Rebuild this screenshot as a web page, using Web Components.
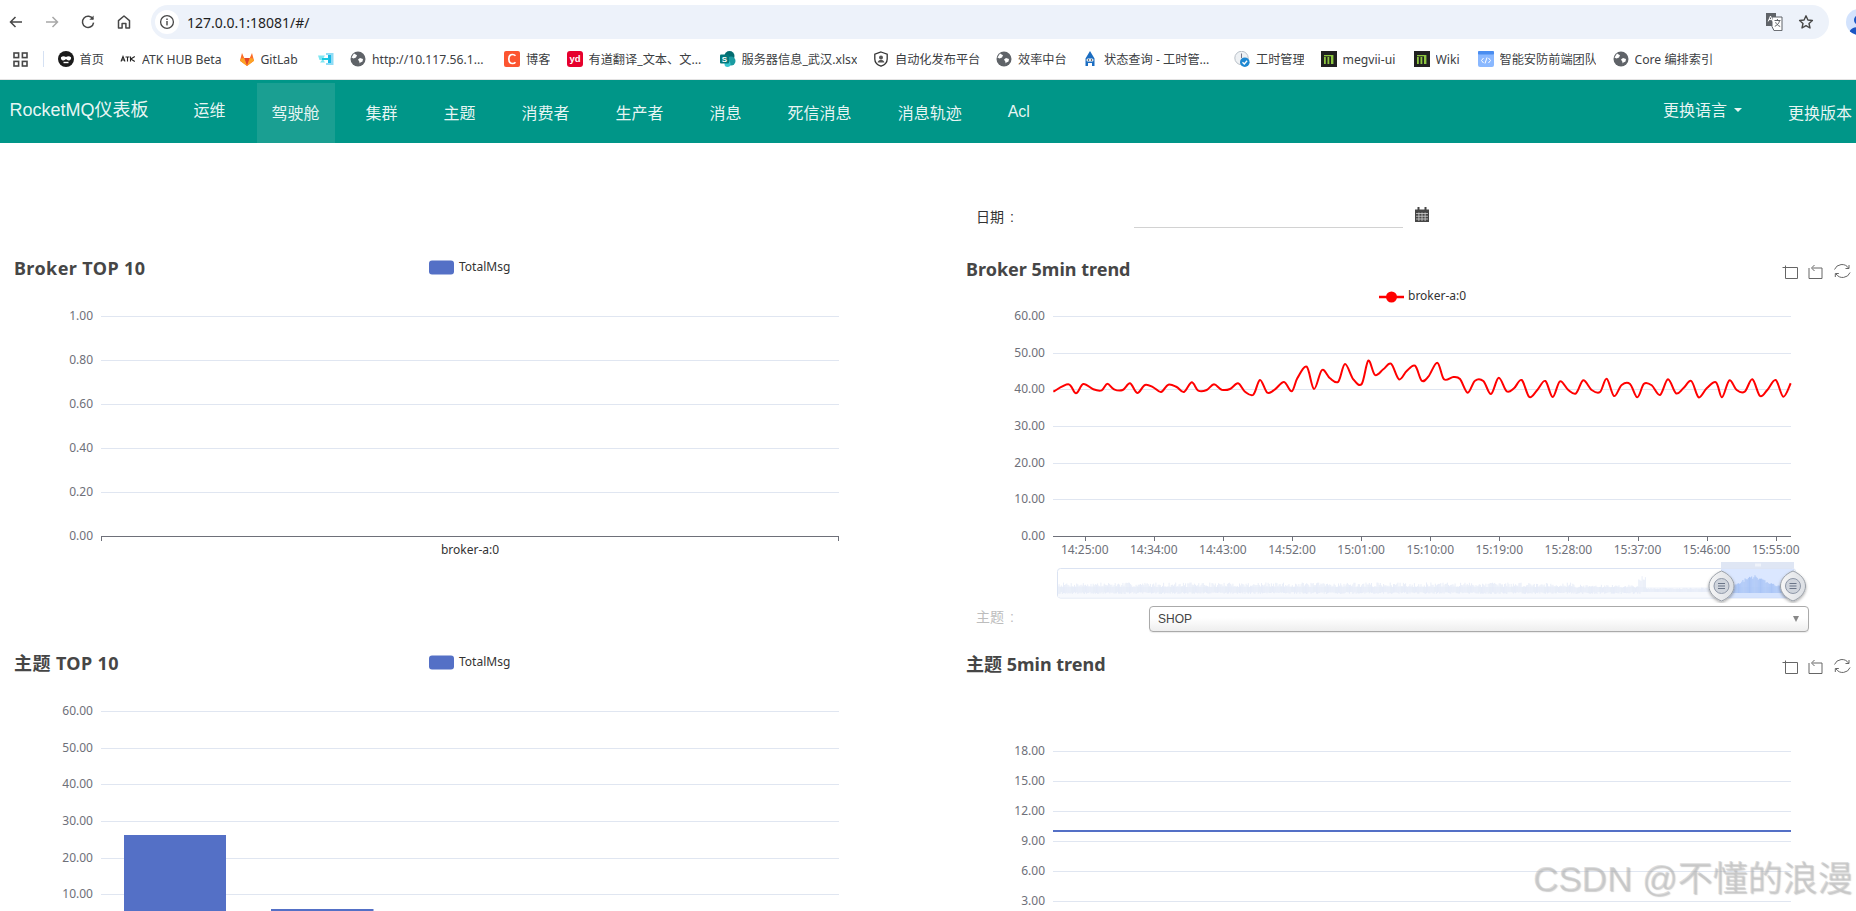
<!DOCTYPE html>
<html lang="zh">
<head>
<meta charset="utf-8">
<title>RocketMQ</title>
<style>
html,body{margin:0;padding:0;height:911px;overflow:hidden;background:#fff;font-family:"Liberation Sans","Noto Sans CJK SC",sans-serif}
</style>
</head>
<body>
<rocket-app>
  <browser-toolbar slot="chrome" url="127.0.0.1:18081/#/"></browser-toolbar>
  <bookmark-bar slot="chrome">
    <bookmark-item icon="monkey" w="24">首页</bookmark-item>
    <bookmark-item icon="atk" w="80">ATK HUB Beta</bookmark-item>
    <bookmark-item icon="gitlab" w="40.5">GitLab</bookmark-item>
    <bookmark-item icon="cyan" w="0"></bookmark-item>
    <bookmark-item icon="globe" w="115.5">http://10.117.56.1...</bookmark-item>
    <bookmark-item icon="csdn" w="24">博客</bookmark-item>
    <bookmark-item icon="yd" w="114.5">有道翻译_文本、文...</bookmark-item>
    <bookmark-item icon="sharepoint" w="115">服务器信息_武汉.xlsx</bookmark-item>
    <bookmark-item icon="shield" w="84.5">自动化发布平台</bookmark-item>
    <bookmark-item icon="globe" w="47.5">效率中台</bookmark-item>
    <bookmark-item icon="robot" w="113.5">状态查询 - 工时管...</bookmark-item>
    <bookmark-item icon="clock" w="48">工时管理</bookmark-item>
    <bookmark-item icon="megvii" w="54.5">megvii-ui</bookmark-item>
    <bookmark-item icon="megvii" w="25.5">Wiki</bookmark-item>
    <bookmark-item icon="code" w="96.5">智能安防前端团队</bookmark-item>
    <bookmark-item icon="globe" w="80">Core 编排索引</bookmark-item>
  </bookmark-bar>
  <app-navbar slot="chrome" brand="RocketMQ仪表板">
    <nav-item raised>运维</nav-item>
    <nav-item active>驾驶舱</nav-item>
    <nav-item>集群</nav-item>
    <nav-item>主题</nav-item>
    <nav-item>消费者</nav-item>
    <nav-item>生产者</nav-item>
    <nav-item>消息</nav-item>
    <nav-item>死信消息</nav-item>
    <nav-item>消息轨迹</nav-item>
    <nav-item>Acl</nav-item>
    <nav-item slot="right" raised caret>更换语言</nav-item>
    <nav-item slot="right">更换版本</nav-item>
  </app-navbar>

  <dash-grid slot="main">
    <dash-column slot="left" lead="108">
      <echart-panel kind="broker-top" heading="Broker TOP 10" h="395" ty="19" ls=".4"></echart-panel>
      <echart-panel kind="topic-top" heading="主题 TOP 10" h="395" ty="19" ls=".4"></echart-panel>
    </dash-column>
    <dash-column slot="right" lead="60">
      <date-filter label="日期 :"></date-filter>
      <echart-panel kind="broker-trend" heading="Broker 5min trend" h="352" ty="20"></echart-panel>
      <topic-select label="主题 :" value="SHOP"></topic-select>
      <echart-panel kind="topic-trend" heading="主题 5min trend" h="395" ty="20"></echart-panel>
    </dash-column>
  </dash-grid>
  <page-watermark slot="main">CSDN @不懂的浪漫</page-watermark>
</rocket-app>

<script>
const CJK = '"Noto Sans CJK SC"';
function shadow(el, html){ const r = el.attachShadow({mode:'open'}); r.innerHTML = html; return r; }

customElements.define('rocket-app', class extends HTMLElement{
  constructor(){super();shadow(this,`<style>
    :host{display:block;height:911px;overflow:hidden;position:relative}
    .main{position:relative;height:768px;overflow:hidden}
  </style><slot name="chrome"></slot><div class="main"><slot name="main"></slot></div>`);}
});

customElements.define('browser-toolbar', class extends HTMLElement{
  constructor(){super();
    const s='fill="none" stroke="#474747" stroke-width="1.5"';
    shadow(this,`<style>
    :host{display:flex;height:40px;overflow:hidden;background:#fff;box-sizing:border-box;align-items:flex-start;font-family:"Noto Sans",sans-serif}
    .nav{width:36px;height:34px;margin-top:5px;display:flex;align-items:center;justify-content:center;flex:none}
    .navs{display:flex;margin-left:-2px;flex:none}
    .url{flex:none;width:1678px;height:34px;margin:5px 0 0 9px;background:#edf2fa;border-radius:17px;display:flex;align-items:center;box-sizing:border-box;padding:0 0 0 4px}
    .info{width:24px;height:24px;border-radius:12px;background:#fff;display:flex;align-items:center;justify-content:center;flex:none}
    .txt{margin-left:8px;font-size:14px;color:#1f1f1f;flex:1}
    .tr{width:18px;height:18px;margin-right:15px;flex:none}
    .star{margin-right:15.5px;flex:none}
    .av{width:26px;height:26px;border-radius:13px;background:#d3e3fd;margin:9px 0 0 17px;flex:none;overflow:hidden;display:flex;align-items:flex-end;justify-content:center}
    </style>
    <div class="navs">
      <div class="nav"><svg width="16" height="16" viewBox="0 0 16 16"><path d="M14 8H3M7.5 3 2.5 8l5 5" ${s}/></svg></div>
      <div class="nav"><svg width="16" height="16" viewBox="0 0 16 16"><path d="M2 8h11M8.5 3l5 5-5 5" fill="none" stroke="#a8a8a8" stroke-width="1.5"/></svg></div>
      <div class="nav"><svg width="16" height="16" viewBox="0 0 16 16"><path d="M13 5.2A5.6 5.6 0 1 0 13.6 8.6" ${s}/><path d="M13.6 1.6v4.2H9.4z" fill="#474747"/></svg></div>
      <div class="nav"><svg width="16" height="16" viewBox="0 0 16 16"><path d="M8 2 2.5 6.6V14h3.6V9.6h3.8V14h3.6V6.6z" ${s} stroke-linejoin="round"/></svg></div>
    </div>
    <div class="url">
      <div class="info"><svg width="16" height="16" viewBox="0 0 16 16"><circle cx="8" cy="8" r="6.4" fill="none" stroke="#474747" stroke-width="1.3"/><rect x="7.3" y="7" width="1.4" height="4.4" fill="#474747"/><rect x="7.3" y="4.5" width="1.4" height="1.5" fill="#474747"/></svg></div>
      <div class="txt">${this.getAttribute('url')||''}</div>
      <svg class="tr" viewBox="0 0 18 18"><rect x="1" y="0" width="10" height="13" fill="#5f6368"/><path d="M7 4h10v13.6H9l-2-4z" fill="#fff" stroke="#5f6368"/><path d="M3.2 8.4 5.5 3l2.2 5.4M4 6.6h3" stroke="#fff" fill="none"/><path d="M9.5 7.5h6M12.4 6v1.5M14.6 7.5c-.6 3-2.6 5-4.8 5.8M10.6 9.2c.8 2 2.2 3.3 4.6 4.3" stroke="#5f6368" fill="none"/></svg>
      <svg class="star" width="16" height="16" viewBox="0 0 16 16"><path d="M8 1.8 9.9 6l4.5.5-3.4 3 1 4.5L8 11.6 4 14l1-4.5-3.4-3L6.1 6z" fill="none" stroke="#474747" stroke-width="1.4" stroke-linejoin="round"/></svg>
    </div>
    <div class="av"><svg width="22" height="22" viewBox="0 0 22 22"><circle cx="11" cy="7" r="5" fill="#1a56c4"/><path d="M1 22c0-6 4-8 10-8s10 2 10 8z" fill="#1a56c4"/></svg></div>`);}
});

customElements.define('bookmark-bar', class extends HTMLElement{
  constructor(){super();shadow(this,`<style>
    :host{display:flex;height:40px;box-sizing:border-box;background:#fff;border-bottom:1px solid #e3e3e3;align-items:center;padding-left:13px;overflow:hidden;padding-bottom:1px}
    .apps{width:15px;height:15px;flex:none}
    .sep{width:1px;height:16px;background:#d5e1f3;margin:0 14px 0 14.5px;flex:none}
    .list{display:flex;gap:16.5px;align-items:center}
    </style>
    <svg class="apps" viewBox="0 0 15 15"><g fill="none" stroke="#474747" stroke-width="1.6"><rect x="1" y="1" width="4.6" height="4.6"/><rect x="9.4" y="1" width="4.6" height="4.6"/><rect x="1" y="9.4" width="4.6" height="4.6"/><rect x="9.4" y="9.4" width="4.6" height="4.6"/></g></svg>
    <div class="sep"></div><div class="list"><slot></slot></div>`);}
});

const BM_ICONS = {
  monkey:`<circle cx="8" cy="8" r="8" fill="#1b1b1b"/><path d="M3 6.2c1.5-1.4 3.4-1.2 5-.3 1.6-.9 3.5-1.1 5 .3.4 1.5-.4 3-1.8 3.2-1.3.2-2.4-.6-3.2-1.3-.8.7-1.9 1.5-3.2 1.3C3.400 9.200 2.600 7.700 3 6.200z" fill="#fff"/><path d="M5.500 11.500h5" stroke="#fff" stroke-width="1.400"/>`,
  atk:`<path d="M1 10.500 3 5.500l2 5M1.800 9h2.400M5.500 6h4M7.500 6v4.500M10.500 5.500v5M14.800 5.500l-4 2.500 4 2.500" fill="none" stroke="#222" stroke-width="1.100"/>`,
  gitlab:`<path d="M8 15 1 9.800 3 2l2.200 5h5.600L13 2l2 7.800z" fill="#fc6d26"/><path d="M8 15 5.200 7h5.600z" fill="#e24329"/><path d="M8 15 1 9.800 2 7.400 5.200 7z" fill="#fca326"/><path d="M8 15l7-5.200-1-2.400L10.800 7z" fill="#fca326"/>`,
  cyan:`<path d="M0 4.500h7L5.500 7H9v2H5.500L7 11.500H2L4 9H1.500z" fill="#7fe6f2"/><path d="M8 2h7.500v12H8v-2h5V4H8z" fill="#8fdcf5"/><path d="M10 4h3v8h-3z" fill="#19b7e6"/><path d="M4 7h7v2H4z" fill="#19c9e0"/>`,
  globe:`<circle cx="8" cy="8" r="7.500" fill="#5f6368"/><path d="M4 2.500 7 4.200 6 6.500 3.500 7.500 1.500 6.500M9 15l.5-3 3-1.500.5-2.500-3-1-2 1.500L9.500 11" fill="#fff"/>`,
  csdn:`<rect width="16" height="16" rx="2" fill="#fc5531"/><path d="M11.500 4.800C10.700 3.900 9.800 3.500 8.600 3.500 6.200 3.500 4.800 5.400 4.800 8s1.400 4.500 3.800 4.500c1.200 0 2.100-.4 2.900-1.300" fill="none" stroke="#fff" stroke-width="1.700"/>`,
  yd:`<rect width="16" height="16" rx="3" fill="#e6002d"/><text x="8" y="11.300" font-size="9.500" text-anchor="middle" fill="#fff" font-family="Liberation Sans" font-weight="bold">yd</text>`,
  sharepoint:`<circle cx="9.500" cy="5" r="5" fill="#036c70"/><circle cx="11" cy="10" r="4.500" fill="#1a9ba1"/><circle cx="7.500" cy="13" r="3" fill="#37c6d0"/><rect x="0" y="3.500" width="9" height="9" rx="1" fill="#03787c"/><text x="4.500" y="10.800" font-size="8" text-anchor="middle" fill="#fff" font-family="Liberation Sans" font-weight="bold">S</text>`,
  shield:`<path d="M8 1 14.200 3.200V8c0 3.600-2.600 5.900-6.200 7.200C4.400 13.900 1.800 11.600 1.800 8V3.200z" fill="#fff" stroke="#333" stroke-width="1.300"/><circle cx="8" cy="6.500" r="2" fill="#555"/><path d="M4.500 11.500c.6-2 2-2.800 3.500-2.800s2.900.8 3.500 2.800z" fill="#555"/>`,
  robot:`<path d="M8 0 12.500 7.500V15H10V12H6v3H3.500V7.500z" fill="#1b6dc1"/><rect x="4.500" y="7.500" width="7" height="3" rx="1.500" fill="#fff"/><circle cx="6.500" cy="9" r=".8" fill="#123"/><circle cx="9.500" cy="9" r=".8" fill="#123"/>`,
  clock:`<circle cx="7.500" cy="7" r="6.700" fill="#eef1f4" stroke="#b9c0c8"/><path d="M7.500 2.500V7" stroke="#778" stroke-width="1"/><circle cx="10.800" cy="11.200" r="4.800" fill="#1e88d2"/><path d="M8.500 11.200l1.800 1.800 2.800-3.200" fill="none" stroke="#fff" stroke-width="1.300"/>`,
  megvii:`<rect width="16" height="16" fill="#202020"/><rect x="3" y="6" width="1.800" height="7" fill="#8cc63f"/><rect x="6.500" y="6" width="1.800" height="7" fill="#8cc63f"/><rect x="10" y="4" width="2.400" height="9" fill="#8cc63f"/><rect x="3" y="4" width="7" height="1.300" fill="#8cc63f"/>`,
  code:`<rect width="16" height="16" rx="2" fill="#8ab8ff"/><rect width="16" height="3.500" rx="1" fill="#4a8df0"/><path d="M5.500 7 3.500 9.500l2 2.500M10.500 7l2 2.500-2 2.500M9 6.500 7 12.500" fill="none" stroke="#fff" stroke-width="1"/>`
};
customElements.define('bookmark-item', class extends HTMLElement{
  constructor(){super();
    const w=this.getAttribute('w');
    shadow(this,`<style>
    :host{display:flex;align-items:center;flex:none;font:12.2px "Noto Sans",${CJK},sans-serif;color:#3c4043;white-space:nowrap}
    svg{width:16px;height:16px;flex:none}
    .t{margin-left:${+w?6:0}px;width:${w}px;overflow:hidden}
    </style><svg viewBox="0 0 16 16">${BM_ICONS[this.getAttribute('icon')]||''}</svg><span class="t"><slot></slot></span>`);}
});

customElements.define('app-navbar', class extends HTMLElement{
  constructor(){super();shadow(this,`<style>
    :host{display:flex;height:63px;background:#009688;overflow:hidden;color:#fff;gap:0}
    .brand{font:18px "Liberation Sans",${CJK},sans-serif;line-height:61px;height:60px;margin-left:9.500px;width:154px;flex:none;color:rgba(255,255,255,.93);white-space:nowrap;padding-right:15px;box-sizing:content-box}
    .list{display:flex;gap:16px;flex:1}
    .right{display:flex;gap:16px;margin-right:-11px;flex:none}
    </style><div class="brand">${this.getAttribute('brand')}</div>
    <div class="list"><slot></slot></div><div class="right"><slot name="right"></slot></div>`);}
});

customElements.define('nav-item', class extends HTMLElement{
  constructor(){super();
    const raised=this.hasAttribute('raised'), active=this.hasAttribute('active'), caret=this.hasAttribute('caret');
    shadow(this,`<style>
    :host{display:flex;align-items:center;justify-content:center;box-sizing:border-box;height:60px;margin-top:${raised?0:3}px;padding:0 15px 2px;font:16px "Liberation Sans",${CJK},sans-serif;color:rgba(255,255,255,.92);white-space:nowrap;flex:none;${active?'background:#1a9f92;':''}}
    i{display:inline-block;width:0;height:0;margin-left:7px;margin-top:2px;border:4px solid transparent;border-top-color:#e8f5f3;border-bottom:0}
    </style><slot></slot>${caret?'<i></i>':''}`);}
});

customElements.define('dash-grid', class extends HTMLElement{
  constructor(){super();shadow(this,`<style>
    :host{display:grid;grid-template-columns:1fr 1fr;width:1856px}
    ::slotted([slot=left]){padding-right:24px}
    ::slotted([slot=right]){padding-left:24px}
    </style><slot name="left"></slot><slot name="right"></slot>`);}
});
customElements.define('dash-column', class extends HTMLElement{
  constructor(){super();shadow(this,`<style>
    :host{display:flex;flex-direction:column;box-sizing:border-box;padding-top:${this.getAttribute('lead')}px}
    </style><slot></slot>`);}
});

customElements.define('date-filter', class extends HTMLElement{
  constructor(){super();shadow(this,`<style>
    :host{display:flex;height:25px;margin-bottom:23px;padding-left:24px;align-items:flex-start;font:14px "Liberation Sans",${CJK},sans-serif;color:#333}
    .l{width:158px;line-height:28px;flex:none;word-spacing:2px}
    .i{width:269px;height:25px;box-sizing:border-box;border-bottom:1px solid #d2d2d2;flex:none}
    svg{width:14px;height:15px;margin:4px 0 0 12px;flex:none}
    </style><div class="l">${this.getAttribute('label')}</div><div class="i"></div>
    <svg viewBox="0 0 14 15"><path d="M0 2.500h14V15H0z" fill="#464646"/><rect x="2.500" y="0" width="2" height="3.500" fill="#464646"/><rect x="9.500" y="0" width="2" height="3.500" fill="#464646"/><g fill="#cfcfcf"><rect x="1" y="6" width="12" height=".8"/><rect x="1" y="8.800" width="12" height=".8"/><rect x="1" y="11.600" width="12" height=".8"/><rect x="3.500" y="5.500" width=".8" height="8.500"/><rect x="6.600" y="5.500" width=".8" height="8.500"/><rect x="9.700" y="5.500" width=".8" height="8.500"/></g></svg>`);}
});

customElements.define('topic-select', class extends HTMLElement{
  constructor(){super();shadow(this,`<style>
    :host{display:flex;height:26px;margin:3px 47px 14px 0;padding-left:24px;align-items:flex-start;font:14px "Liberation Sans",${CJK},sans-serif;color:#bdbdbd}
    .l{width:173px;line-height:22px;flex:none;word-spacing:2px}
    .s{flex:1;height:26px;box-sizing:border-box;border:1px solid #aaa;border-radius:4px;background:linear-gradient(#fff 0 45%,#eee 100%);display:flex;align-items:center;justify-content:space-between;padding:0 8px;color:#444;font-size:12px;box-shadow:0 1px 1px rgba(0,0,0,.08)}
    i{width:0;height:0;border:3.500px solid transparent;border-top:6px solid #888;border-bottom:0;margin-right:1px}
    </style><div class="l">${this.getAttribute('label')}</div><div class="s"><span>${this.getAttribute('value')}</span><i></i></div>`);}
});

/* -------- charts -------- */
const GRID={x0:101,x1:839,top:65,bottom:285};
function catmull(pts){
  let d=`M${pts[0][0]} ${pts[0][1]}`;
  for(let i=0;i<pts.length-1;i++){
    const p0=pts[i-1]||pts[i],p1=pts[i],p2=pts[i+1],p3=pts[i+2]||p2;
    const c1x=p1[0]+(p2[0]-p0[0])/6,c1y=p1[1]+(p2[1]-p0[1])/6,c2x=p2[0]-(p3[0]-p1[0])/6,c2y=p2[1]-(p3[1]-p1[1])/6;
    d+=`C${c1x.toFixed(1)} ${c1y.toFixed(1)} ${c2x.toFixed(1)} ${c2y.toFixed(1)} ${p2[0].toFixed(1)} ${p2[1].toFixed(1)}`;
  }
  return d;
}
const RED_A=[[40,155],[85,133],[108,160],[130,132],[160,148],[185,151],[202,131],[222,148],[248,150],[270,130],[292,159],[315,135],[340,142],[363,156],[385,134],[410,141],[432,156],[455,127],[475,152],[500,150],[522,133],[545,149],[570,147],[594,130],[615,155],[640,164],[660,120],[682,158],[705,148],[732,126],[755,154],[772,115],[800,80],[822,147],[846,90],[870,115],[895,125],[915,72],[940,118],[965,132],[985,62],[1005,105],[1030,88],[1053,71],[1077,118],[1100,93],[1125,77],[1145,122],[1165,110],[1192,68]];
const RED_B=[[12,118],[40,111],[60,117],[83,158],[105,122],[130,123],[153,162],[176,113],[200,154],[222,145],[245,120],[268,171],[292,150],[316,123],[338,171],[360,124],[385,150],[408,160],[430,121],[455,150],[480,156],[500,116],[522,168],[545,135],[570,132],[592,172],[612,131],[635,136],[660,165],[684,118],[708,160],[730,145],[754,123],[776,172],[800,145],[828,127],[846,172],[868,121],[890,150],[914,155],[937,118],[960,168],[982,150],[1007,120],[1030,170],[1052,130]];
const redPts=[...RED_A.map(p=>[1040+p[0]/3-952,340+p[1]/3-251]),...RED_B.map(p=>[1440+p[0]/3-952,340+p[1]/3-251])];

function gridLines(labels,step){
  let s='';
  labels.forEach((l,i)=>{const y=Math.round(GRID.top+i*step)+.5;
    s+=`<line x1="${GRID.x0}" x2="${GRID.x1}" y1="${y}" y2="${y}" stroke="#e0e6f1"/>`;
    s+=`<text class="ax" x="${GRID.x0-8}" y="${y}" text-anchor="end">${l}</text>`;
  });
  return s;
}
function xAxis(){return `<line x1="${GRID.x0}" x2="${GRID.x1}" y1="285.500" y2="285.500" stroke="#6e7079"/>`;}
function tick(x){return `<line x1="${x}" x2="${x}" y1="285" y2="290" stroke="#6e7079"/>`;}
function barLegend(y){return `<rect x="429" y="${y-7}" width="25" height="14" rx="3" fill="#5470c6"/><text class="lg" x="459" y="${y}">TotalMsg</text>`;}
function toolbox(){
  return `<g transform="translate(829.500,14.500)" fill="none" stroke="#666" stroke-width="1">
    <path d="M4 0V13H16V2H1"/>
    <path d="M31 2.500H40.500V13H27.500V2.500M33 -.5 30 2.500 33 5.500"/>
    <path d="M67 2.500A8 8 0 0 0 53 4M54.600 8.500A8 8 0 0 0 68.600 7M67.500 -.5V3H64M53.800 11.500V8H57.300"/>
  </g>`;
}
function prng(seed){let s=seed;return ()=>{s=(s*1664525+1013904223)>>>0;return s/4294967296;};}
function dataZoom(){
  const r=prng(7);
  let up='',sel='';
  for(let x=106;x<=769;x+=1.1){
    const t=(x-105)/663;
    let a=3+r()*4.5;
    if(t>.78) a*=.7;
    if(t>.88) a=1+r()*1.2;
    if(x>686&&x<694) a=9+r()*5;
    up+=`M${x.toFixed(1)} ${(339-a).toFixed(1)}V${(341+(t>.88?0:r()*2)).toFixed(1)}`;
  }
  for(let x=770;x<=842;x+=1.1){
    const c=Math.exp(-Math.pow((x-802)/14,2));
    const a=3+c*11*(.7+r()*.3)+r()*2;
    sel+=`M${x.toFixed(1)} ${(339-a).toFixed(1)}V342`;
  }
  const handle=x=>`<g transform="translate(${x},335)" filter="url(#hs)">
    <path d="M0 -15C7.500 -12 12.500 -6.500 12.500 0C12.500 6.500 7.500 12 0 15C-7.500 12 -12.500 6.500 -12.500 0C-12.500 -6.500 -7.500 -12 0 -15Z" fill="url(#hg)" stroke="#9aa0a8"/>
    <circle r="7.500" fill="#cfd4dc" stroke="#8f98a8"/><path d="M-3.500 -2.500H3.500M-3.500 0H3.500M-3.500 2.500H3.500" stroke="#6b7488" stroke-width="1.100"/>
  </g>`;
  return `<defs><linearGradient id="hg" x1="0" x2="1" y1="0" y2="0"><stop offset="0" stop-color="#f6f6f6"/><stop offset="1" stop-color="#dcdfe4"/></linearGradient>
    <filter id="hs" x="-50%" y="-50%" width="200%" height="200%"><feDropShadow dx="0" dy="1.500" stdDeviation="1.500" flood-color="#000" flood-opacity=".35"/></filter></defs>
    <rect x="105.500" y="317.500" width="738" height="29.500" rx="3" fill="#fff" stroke="#dbe3f2"/>
    <rect x="106" y="336" width="737" height="10.500" fill="#f7f9fd"/>
    <path d="${up}" stroke="#e0e7f6" stroke-width=".7" fill="none"/>
    <rect x="769" y="318" width="73" height="29" fill="#87afff" fill-opacity=".3"/>
    <path d="${sel}" stroke="#9dbcf4" stroke-width=".8" fill="none"/>
    <rect x="769" y="311" width="73" height="6.500" fill="#dfe6f4"/>
    <path d="M804 312.500v3M806 312.500v3M808 312.500v3" stroke="#fff"/>
    ${handle(769.500)}${handle(841)}`;
}

customElements.define('echart-panel', class extends HTMLElement{
  constructor(){super();
    const kind=this.getAttribute('kind'),h=+this.getAttribute('h'),ty=+this.getAttribute('ty'),ls=this.getAttribute('ls')||0;
    let b='';
    if(kind==='broker-top'){
      b+=barLegend(16.500)+gridLines(['1.00','0.80','0.60','0.40','0.20','0.00'],44)+xAxis()+tick(101.500)+tick(838.500);
      b+=`<text class="cat" x="470" y="299.500" text-anchor="middle">broker-a:0</text>`;
    }else if(kind==='topic-top'){
      b+=barLegend(16.500)+gridLines(['60.00','50.00','40.00','30.00','20.00','10.00'],36.67);
      b+=`<rect x="124" y="189" width="102" height="96" fill="#5470c6"/><rect x="271" y="263" width="102.500" height="22" fill="#5470c6"/>`;
      b+=xAxis();
    }else if(kind==='broker-trend'){
      b+=toolbox();
      b+=`<line x1="427" x2="452" y1="46" y2="46" stroke="#f00" stroke-width="2.500"/><circle cx="439.500" cy="46" r="5.500" fill="#f00"/><text class="lg" x="456" y="45.500">broker-a:0</text>`;
      b+=gridLines(['60.00','50.00','40.00','30.00','20.00','10.00','0.00'],36.67)+xAxis();
      const times=['14:25:00','14:34:00','14:43:00','14:52:00','15:01:00','15:10:00','15:19:00','15:28:00','15:37:00','15:46:00','15:55:00'];
      times.forEach((t,i)=>{const x=132.700+i*69.100;
        b+=tick(Math.round(x)+.5)+`<text class="ax" x="${x.toFixed(1)}" y="299.500" text-anchor="middle">${t}</text>`;});
      b+=`<path d="${catmull(redPts)}" fill="none" stroke="#f00" stroke-width="2" stroke-linejoin="round"/>`;
      b+=dataZoom();
    }else{
      b+=toolbox();
      ['18.00','15.00','12.00','9.00','6.00','3.00'].forEach((l,i)=>{const y=105+i*30+.5;
        b+=`<line x1="${GRID.x0}" x2="${GRID.x1}" y1="${y}" y2="${y}" stroke="#e0e6f1"/><text class="ax" x="${GRID.x0-8}" y="${y}" text-anchor="end">${l}</text>`;});
      b+=`<line x1="${GRID.x0}" x2="${GRID.x1}" y1="185" y2="185" stroke="#5470c6" stroke-width="2"/>`;
    }
    shadow(this,`<style>
    :host{display:block;width:904px;height:${h}px;flex:none;overflow:hidden}
    svg{display:block;width:904px;height:${h}px}
    text{font-family:"Noto Sans",${CJK},sans-serif;dominant-baseline:middle}
    .ttl{font-size:18px;font-weight:700;fill:#464646;letter-spacing:${ls}px}
    .ax{font-size:12px;fill:#6e7079}
    .lg{font-size:12px;fill:#333}
    .cat{font-size:12px;fill:#333}
    </style><svg viewBox="0 0 904 ${h}"><text class="ttl" x="14" y="${ty}">${this.getAttribute('heading')}</text>${b}</svg>`);}
});

customElements.define('page-watermark', class extends HTMLElement{
  constructor(){super();shadow(this,`<style>
    :host{position:absolute;left:1533px;top:711px;font:35px "Liberation Sans",${CJK},sans-serif;color:rgba(190,190,190,.5);white-space:nowrap;line-height:50px;text-shadow:1px 1px 1px rgba(120,120,120,.35);pointer-events:none}
    </style><slot></slot>`);}
});
</script>
</body>
</html>
